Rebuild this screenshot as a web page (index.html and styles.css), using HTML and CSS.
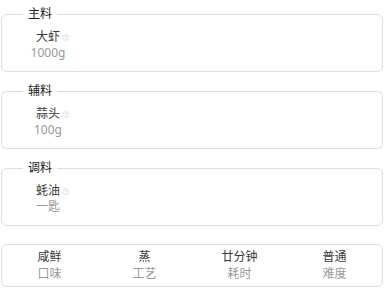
FILE: index.html
```html
<!DOCTYPE html>
<html lang="zh-CN">
<head>
  <meta charset="UTF-8" />
  <meta name="viewport" content="width=device-width, initial-scale=1.0"/>
  <title>菜谱详情</title>
  <link rel="stylesheet" href="styles.css">
</head>
<body>
  <div class="container">
    <fieldset class="group">
      <legend>主料</legend>
      <div class="items">
        <div class="item">
          <div class="item-name">大虾<svg class="tip" viewBox="0 0 8 8"><circle cx="4" cy="4" r="3.3"/><path d="M3 3.2a1 1 0 1 1 1.3 1L4 4.8M4 5.8v.3"/></svg></div>
          <div class="item-amount">1000g</div>
        </div>
      </div>
    </fieldset>

    <fieldset class="group">
      <legend>辅料</legend>
      <div class="items">
        <div class="item">
          <div class="item-name">蒜头<svg class="tip" viewBox="0 0 8 8"><circle cx="4" cy="4" r="3.3"/><path d="M3 3.2a1 1 0 1 1 1.3 1L4 4.8M4 5.8v.3"/></svg></div>
          <div class="item-amount">100g</div>
        </div>
      </div>
    </fieldset>

    <fieldset class="group">
      <legend>调料</legend>
      <div class="items">
        <div class="item">
          <div class="item-name">蚝油<svg class="tip" viewBox="0 0 8 8"><circle cx="4" cy="4" r="3.3"/><path d="M3 3.2a1 1 0 1 1 1.3 1L4 4.8M4 5.8v.3"/></svg></div>
          <div class="item-amount">一匙</div>
        </div>
      </div>
    </fieldset>

    <div class="stats">
      <div class="stat">
        <div class="stat-value">咸鲜</div>
        <div class="stat-label">口味</div>
      </div>
      <div class="stat">
        <div class="stat-value">蒸</div>
        <div class="stat-label">工艺</div>
      </div>
      <div class="stat">
        <div class="stat-value">廿分钟</div>
        <div class="stat-label">耗时</div>
      </div>
      <div class="stat">
        <div class="stat-value">普通</div>
        <div class="stat-label">难度</div>
      </div>
    </div>
  </div>
</body>
</html>
```

FILE: styles.css
```css
body {
  font-family: "Noto Sans", "Noto Sans CJK SC", sans-serif;
  font-size: 12px;
  color: #333;
  margin: 0;
  background: #fff;
}

.container {
  width: 382px;
  margin-left: 1px;
  padding-top: 7px;
}

.group {
  margin: 0 0 12px;
  padding: 9px 20px 10px;
  border: 1px solid #ddd;
  border-radius: 6px;
}

.group legend {
  margin-left: 1px;
  padding: 0 5px;
  line-height: 14px;
  color: #222;
}

.items {
  display: flex;
  gap: 10px;
}

.item {
  width: 52px;
  line-height: 14px;
  text-align: center;
}

.item-name {
  position: relative;
  display: inline-block;
  vertical-align: top;
  color: #3a3a3a;
}

.tip {
  position: absolute;
  left: calc(100% + 2px);
  top: 4px;
  width: 7px;
  height: 7px;
  fill: none;
  stroke: #d4d4d4;
  stroke-width: 0.8;
}

.item-amount {
  line-height: 17px;
  color: #999;
}

.stats {
  display: grid;
  grid-template-columns: repeat(4, 1fr);
  margin-top: 18px;
  padding: 4px 0 4px;
  border: 1px solid #ddd;
  border-radius: 6px;
  text-align: center;
}

.stat-value {
  line-height: 16px;
  color: #3a3a3a;
}

.stat-label {
  line-height: 17px;
  color: #999;
}
```
